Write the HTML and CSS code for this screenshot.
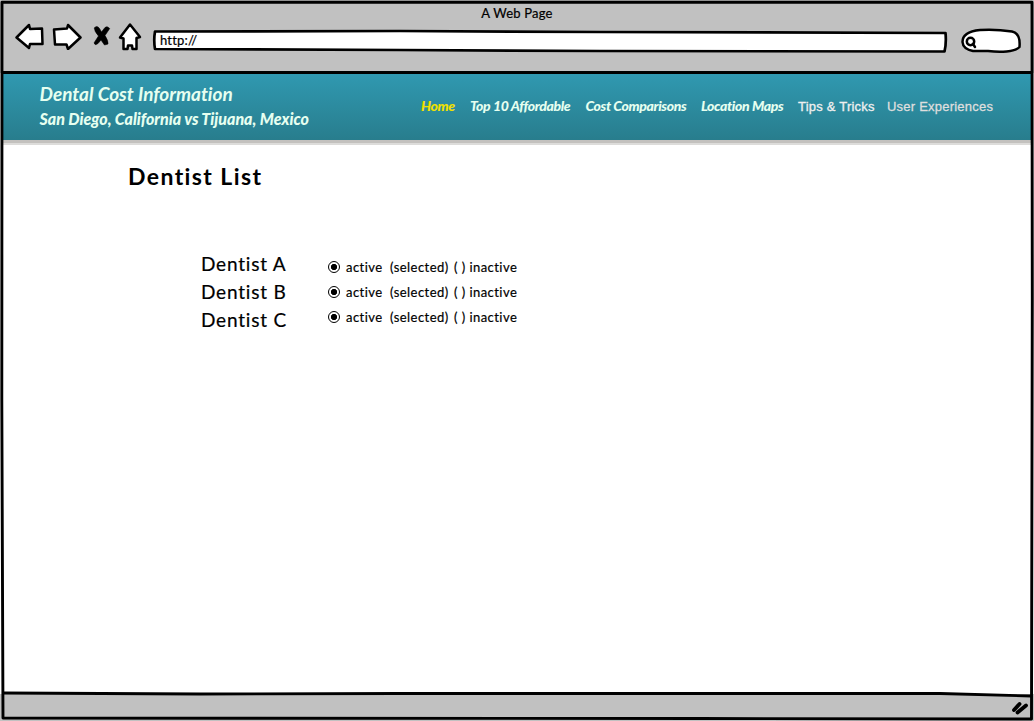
FILE: index.html
```
<!DOCTYPE html>
<html lang="en">
<head>
<meta charset="utf-8">
<title>A Web Page</title>
<link rel="stylesheet" href="styles.css">
</head>
<body>
<div class="window">
  <div class="chrome">
    <div class="window-title"><span>A Web Page</span></div>
    <div class="toolbar">
      <svg class="icon back" width="30" height="28" viewBox="15 22 30 28"><path d="M16.500 37.500 29 25 30 29 42 28.500 42.500 44 30 44 29 48Z"/></svg>
      <svg class="icon forward" width="30" height="28" viewBox="52 22 30 28"><path d="M54 29.500 67 28.500 68 25 80.500 37.500 68 49 66.500 44.500 55 44.500Z"/></svg>
      <svg class="icon stop" width="20" height="28" viewBox="92 22 20 28"><path class="solid" d="M94.500 28Q97 25 99.500 28.500L101.500 32 105 27.500Q107 25.500 109.700 28.500L105 35.500Q108.500 41 108 44L104.500 45 101 40 98 43.500Q95 46 94 43L98.500 36Q94 31 94.500 28Z"/></svg>
      <svg class="icon home" width="24" height="30" viewBox="118 22 24 30"><path d="M130 24.500 140 37 136.500 38 136.500 49 132.500 49 132 45.500 128 45.500 127.500 49 123.500 49 123.500 38.500 120 37.500Z"/></svg>
      <div class="address">
        <svg class="address-shape" width="796" height="26" viewBox="152 28 796 26"><path d="M155 31.500 400 31 600 32 945.500 33Q946.500 43 944.500 51.500L600 51 400 50 155 49Q153.500 40 155 31.500Z"/></svg>
        <span class="address-text">http://</span>
      </div>
      <svg class="icon search" width="62" height="28" viewBox="960 27 62 28"><path d="M962.500 42C962.500 34 969 31 980 30Q996 29 1012 31.500C1020 33 1020 41 1019.500 47C1015 52 1000 52.500 988 51L973 51Q963 49 962.500 42Z"/><circle cx="970.500" cy="41.500" r="3.700"/><path d="M973 44 975 47"/></svg>
    </div>
  </div>
  <header class="site-header">
    <div class="brand">
      <div class="brand-name"><span>Dental Cost Information</span></div>
      <div class="brand-sub"><span>San Diego, California vs Tijuana, Mexico</span></div>
    </div>
    <nav class="nav">
      <a class="link home-link">Home</a>
      <a class="link top">Top 10 Affordable</a>
      <a class="link cost">Cost Comparisons</a>
      <a class="link maps">Location Maps</a>
      <a class="link plain tips">Tips &amp; Tricks</a>
      <a class="link plain users">User Experiences</a>
    </nav>
  </header>
  <main class="content">
    <h1 class="heading"><span>Dentist List</span></h1>
    <div class="list">
      <div class="names">
        <div class="name">Dentist A</div>
        <div class="name">Dentist B</div>
        <div class="name">Dentist C</div>
      </div>
      <div class="states">
        <div class="state"><span class="radio"></span><span class="active">active</span><span class="selected">(selected)</span><span class="inactive">( ) inactive</span></div>
        <div class="state"><span class="radio"></span><span class="active">active</span><span class="selected">(selected)</span><span class="inactive">( ) inactive</span></div>
        <div class="state"><span class="radio"></span><span class="active">active</span><span class="selected">(selected)</span><span class="inactive">( ) inactive</span></div>
      </div>
    </div>
  </main>
  <footer class="status"></footer>
  <svg class="frame" width="1034" height="721" viewBox="0 0 1034 721">
    <path d="M2 2.200H1032L1032.300 300 1031.500 719 700 718.500 3 718 1.800 400Z"/>
    <path d="M2 72.500H1032"/>
    <path d="M3 693 200 694 400 693.500 940 693.500 1031 696"/>
    <path class="grip" d="M1014 710 1019.500 704M1017.500 712.500 1026 705.500"/>
  </svg>
</div>
</body>
</html>
```
FILE: styles.css
```
* { box-sizing: border-box; }
body { margin: 0; background: #fff; color: #000; font-family: Lato, "Liberation Sans", sans-serif; font-variant-ligatures: none; }
.window { position: relative; display: flex; flex-direction: column; width: 1034px; height: 721px; overflow: hidden; }
.chrome { height: 73px; background: #c1c1c1; }
.window-title { height: 22px; padding-top: 4px; text-align: center; font-size: 13px; line-height: 19px; letter-spacing: .2px; -webkit-text-stroke: .2px; }
.toolbar { display: flex; align-items: flex-start; padding-left: 15px; }
.icon { flex: none; fill: #fff; stroke: #000; stroke-width: 2.500; stroke-linejoin: round; stroke-linecap: round; }
.solid { fill: #000; stroke-width: .6; }
.forward { margin-left: 7px; }
.stop { margin-left: 10px; }
.home { margin-left: 6px; }
.address { position: relative; width: 796px; height: 26px; margin: 6px 12px 0 10px; }
.address-shape { display: block; fill: #fff; stroke: #000; stroke-width: 2.700; stroke-linejoin: round; }
.address-text { position: absolute; left: 8px; top: 4px; font-size: 13px; line-height: 17px; letter-spacing: .2px; -webkit-text-stroke: .2px; }
.search { margin-top: 5px; }
.site-header { display: flex; height: 67px; margin: 0 3px; flex: none; background: linear-gradient(#3099b1, #287d8d); box-shadow: 0 3px 0 #c3c1be, 0 5px 0 #dddcda; color: #e6fff0; font-style: italic; font-weight: 700; white-space: nowrap; }
.brand { width: 418px; padding: 8px 0 0 36.500px; }
.brand-name { font-size: 19px; line-height: 26px; }
.brand-sub { font-size: 16px; line-height: 24px; font-weight: 900; letter-spacing: -.02px; }
.nav { display: flex; padding-top: 23px; font-size: 14px; line-height: 20px; }
.link { flex: none; font-weight: 900; letter-spacing: -.35px; }
.home-link { width: 49px; color: #f0e000; }
.top { width: 115.500px; }
.cost { width: 115.500px; }
.maps { width: 97px; }
.plain { padding-top: 1px; font-family: "Liberation Sans", sans-serif; font-size: 13px; font-style: normal; font-weight: 400; letter-spacing: .22px; color: #dedede; -webkit-text-stroke: .3px; }
.tips { width: 89px; color: #f0f0f0; }
.content { flex: 1; padding: 20px 0 0 128px; }
.heading { margin: 0; font-size: 23px; line-height: 32px; letter-spacing: 1.400px; }
.list { display: flex; padding: 58px 0 0 73px; white-space: nowrap; }
.names { width: 127px; font-size: 19px; line-height: 28px; letter-spacing: .8px; -webkit-text-stroke: .2px; }
.states { padding-top: 4px; }
.state { display: flex; align-items: center; height: 25px; font-size: 13px; letter-spacing: .45px; -webkit-text-stroke: .2px; }
.radio { width: 12px; height: 12px; margin: 1px 6px 0 0; border: 1.500px solid #000; border-radius: 50%; background: radial-gradient(circle, #000 2.800px, #fff 3.400px); }
.active { width: 44px; }
.selected { width: 64px; }
.status { height: 27px; background: #c1c1c1; }
.frame { position: absolute; inset: 0; fill: none; stroke: #000; stroke-width: 2.900; stroke-linejoin: round; pointer-events: none; }
.grip { stroke-width: 3.800; stroke-linecap: round; }
```
